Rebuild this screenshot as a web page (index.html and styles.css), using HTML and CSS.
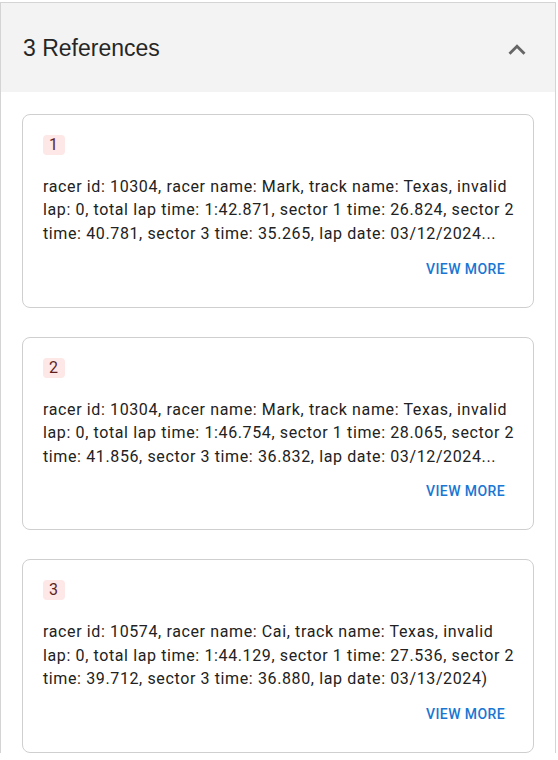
FILE: index.html
```html
<!DOCTYPE html>
<html lang="en">
<head>
<meta charset="utf-8">
<title>References</title>
<link rel="stylesheet" href="styles.css">
</head>
<body>
<section class="panel">
  <header class="panel-header">
    <h2 class="panel-title">3 References</h2>
    <svg class="chevron" viewBox="0 0 24 24" width="34" height="34" aria-hidden="true"><path d="M12 8l-6 6 1.41 1.41L12 10.83l4.59 4.58L18 14z" fill="#666"/></svg>
  </header>
  <div class="panel-body">
    <article class="card">
      <span class="badge">1</span>
      <p class="card-text">racer id: 10304, racer name: Mark, track name: Texas, invalid lap: 0, total lap time: 1:42.871, sector 1 time: 26.824, sector 2 time: 40.781, sector 3 time: 35.265, lap date: 03/12/2024...</p>
      <div class="card-actions"><button class="btn">VIEW MORE</button></div>
    </article>
    <article class="card">
      <span class="badge">2</span>
      <p class="card-text">racer id: 10304, racer name: Mark, track name: Texas, invalid lap: 0, total lap time: 1:46.754, sector 1 time: 28.065, sector 2 time: 41.856, sector 3 time: 36.832, lap date: 03/12/2024...</p>
      <div class="card-actions"><button class="btn">VIEW MORE</button></div>
    </article>
    <article class="card">
      <span class="badge">3</span>
      <p class="card-text">racer id: 10574, racer name: Cai, track name: Texas, invalid lap: 0, total lap time: 1:44.129, sector 1 time: 27.536, sector 2 time: 39.712, sector 3 time: 36.880, lap date: 03/13/2024)</p>
      <div class="card-actions"><button class="btn">VIEW MORE</button></div>
    </article>
  </div>
</section>
</body>
</html>
```
FILE: styles.css
```css
html, body {
  margin: 0;
  padding: 0;
  background: #ffffff;
}
body {
  font-family: Roboto, "Liberation Sans", Arial, sans-serif;
  color: #222222;
}
.panel {
  margin-top: 2px;
  width: 554px;
  border: 1px solid #d4d4d4;
  border-bottom: none;
  background: #ffffff;
}
.panel-header {
  height: 89px;
  background: #f3f3f3;
  display: flex;
  align-items: center;
  justify-content: space-between;
  padding: 0 21px 0 22px;
}
.panel-title {
  margin: 0;
  font-family: "Liberation Sans", Arial, sans-serif;
  font-weight: 400;
  font-size: 23px;
  color: #262626;
  padding-top: 1px;
}
.chevron {
  display: block;
  margin-top: 4px;
}
.panel-body {
  padding: 22px 21px 0 21px;
  display: flex;
  flex-direction: column;
  gap: 29px;
}
.card {
  border: 1px solid #cfcfcf;
  border-radius: 8px;
  padding: 20px;
  display: flex;
  flex-direction: column;
  align-items: flex-start;
}
.badge {
  display: inline-block;
  background: #fde7e7;
  color: #5e1f1f;
  border-radius: 4px;
  font-size: 16px;
  letter-spacing: 0.5px;
  line-height: 20px;
  height: 20px;
  padding: 0 6px;
}
.card-text {
  margin: 20px -6px 0 0;
  font-size: 16px;
  line-height: 23.4px;
  letter-spacing: 0.62px;
  color: #222222;
}
.card-actions {
  align-self: stretch;
  display: flex;
  justify-content: flex-end;
  margin-top: 5.5px;
}
.btn {
  font-family: Roboto, "Liberation Sans", Arial, sans-serif;
  font-size: 14px;
  font-weight: 500;
  letter-spacing: 0.4px;
  color: #1976d2;
  background: none;
  border: none;
  padding: 0 8px;
  height: 36px;
  cursor: pointer;
}
```
